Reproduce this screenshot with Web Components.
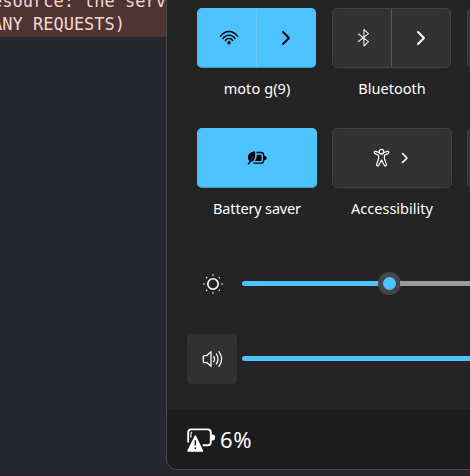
<!DOCTYPE html>
<html lang="en"><head><meta charset="utf-8"><title>Quick settings</title>
<style>
html,body{margin:0;height:476px;overflow:hidden;background:#26272c}
body{font-family:"Noto Sans","Open Sans",sans-serif}
</style></head><body>
<quick-desktop></quick-desktop>
<script>
const define=(name,html,setup)=>customElements.define(name,class extends HTMLElement{
  connectedCallback(){
    if(this.shadowRoot)return;
    const root=this.attachShadow({mode:'open'});
    root.innerHTML=html;
    if(setup)setup(this,root);
  }
});
const icons={
wifi:'<svg width="20" height="18" viewBox="0 0 20 18" fill="none" stroke="currentColor" stroke-width="1.35" stroke-linecap="round"><path d="M1.4 7.4C6 .9 14 .9 18.6 7.4M3.9 9.5C7.4 4.9 12.6 4.9 16.1 9.5M6.3 11.5c2.1-2.9 5.3-2.9 7.4 0"/><circle cx="10" cy="13.8" r="1.7" fill="currentColor" stroke="none"/></svg>',
bt:'<svg width="14" height="20" viewBox="0 0 14 20" fill="none" stroke="currentColor" stroke-width="1.05" stroke-opacity=".9" stroke-linejoin="round" stroke-linecap="round"><path d="M1.500 6l10 7.700-4.600 4.300V1.500l4.600 4.200L1.500 13.500"/></svg>',
chev:'<svg width="10" height="16" viewBox="0 0 10 16" fill="none" stroke="currentColor" stroke-width="1.9" stroke-linejoin="round" stroke-linecap="round"><path d="M2 2l6 6-6 6"/></svg>',
chevs:'<svg width="8" height="12" viewBox="0 0 8 12" fill="none" stroke="currentColor" stroke-width="1.6" stroke-linejoin="round" stroke-linecap="round"><path d="M1.500 1.500L6 6l-4.500 4.500"/></svg>',
saver:'<svg width="20" height="16" viewBox="0 0 20 16"><path d="M8 1.300C4 2 1 3.600 1 7.200c0 1.800.7 3 1.600 3.800L.5 14l1.300.7 2.100-3C7.500 11.800 8.600 8 8 1.300z" fill="currentColor"/><path d="M4 10.500L6.300 6.500" stroke="#3390c0" stroke-width=".6"/><path d="M9.500 2.500h4.700c1.500 0 2.400.9 2.400 2.400v5.900c0 1.500-.9 2.400-2.400 2.400H6.200" fill="none" stroke="currentColor" stroke-width="1.300"/><path d="M9.800 4.800h4.700v6.200H7.800c1.300-1.500 2-3.500 2-6.200zM17 5.500l2.500 1.300v2.400L17 10.500z" fill="currentColor"/></svg>',
access:'<svg width="17" height="20" viewBox="0 0 17 20" fill="none" stroke="currentColor" stroke-width="1.200" stroke-linejoin="round"><circle cx="8.500" cy="3.600" r="2.300"/><path d="M6.400 4.800L2.800 3.400C1.200 2.900.6 5 2 5.600L5.600 7.300v3.200L3.700 16.300c-.4 1.700 1.600 2.300 2.200.8L8.500 12l2.600 5.100c.7 1.500 2.600.9 2.200-.8l-1.900-5.800V7.300L15 5.600c1.400-.7.800-2.700-.8-2.200l-3.600 1.400c-1.200 1.300-3 1.300-4.200 0z"/></svg>',
sun:'<svg width="22" height="22" viewBox="0 0 22 22"><circle cx="11" cy="11" r="5.200" fill="none" stroke="currentColor" stroke-width="1.600"/><g fill="currentColor"><circle cx="11" cy="2" r=".8"/><circle cx="11" cy="20" r=".8"/><circle cx="2" cy="11" r=".8"/><circle cx="20" cy="11" r=".8"/><circle cx="4.700" cy="4.700" r=".8"/><circle cx="17.300" cy="4.700" r=".8"/><circle cx="4.700" cy="17.300" r=".8"/><circle cx="17.300" cy="17.300" r=".8"/></g></svg>',
sound:'<svg width="22" height="20" viewBox="0 0 22 20" fill="none" stroke="currentColor" stroke-width="1.250" stroke-linejoin="round" stroke-linecap="round"><path d="M1.300 7.500q0-1 1-1h2.500L9 2.700v14.600l-4.200-3.800H2.300q-1 0-1-1zM11.700 7.300q1.700 2.700 0 5.400M14.300 5q3.400 5 0 10M16.900 2.600q5.400 7.400 0 14.800"/></svg>',
batt:'<svg width="29" height="25" viewBox="0 0 29 25"><path d="M1.200 14.500V4.500Q1.200 1.400 4.300 1.400H20.700Q23.800 1.400 23.800 4.500V14.200Q23.800 17.300 20.700 17.300H15.700" fill="none" stroke="#fff" stroke-width="1.900"/><path d="M4 9.500V5.800Q4 4.500 5.200 4.200" fill="none" stroke="#ddd" stroke-width="1.300"/><path d="M24 6.500h1.500q2.500 0 2.500 1.700v2.600Q28 12.500 25.500 12.500H24z" fill="#fff"/><path d="M8.300 8.300L1.200 22.800h14.200z" fill="#fff" stroke="#fff" stroke-width="1.800" stroke-linejoin="round"/><path d="M8.300 12.300v5.200M8.300 19.300v1.700" stroke="#1c1c1c" stroke-width="1.500"/></svg>'
};
define('ui-icon','<style>:host{display:block;flex:none}svg{display:block}</style>',(el,root)=>root.innerHTML+=icons[el.getAttribute('name')]||'');
define('console-message',`<style>:host{display:block;height:37px;background:#4e3534;color:#f8d5d3;font:17px/23px "DejaVu Sans Mono",monospace;white-space:pre;overflow:hidden}div{margin:-10px 0 0 -8px}</style><div><slot></slot></div>`);
define('quick-tile',`<style>
:host{display:block;width:120px;text-align:center;color:#fff}
.b{box-sizing:border-box;height:60px;width:120px;border:1px solid #424242;border-radius:5px;background:#323232;display:flex;align-items:stretch}
:host([on]) .b{background:#4cc2ff;border-color:#55c3fb;border-bottom-color:#4098c4;color:#000}
:host([split]) .b{width:119px}
.half{flex:1;display:flex;align-items:center;justify-content:center;gap:11px;box-sizing:border-box}
:host([split]) .half:first-child{flex:0 0 58px;padding-left:3px}
:host([more]) .half{padding-right:3px}
:host([split]) .half+.half{border-left:1px solid #5a5a5a}
:host([split][on]) .half+.half{border-color:#68c8fa}
.l{font-size:14.500px;line-height:20px;margin-top:10px;white-space:nowrap;height:20px}
.l span{display:inline-block;letter-spacing:var(--track,0)}
</style><div class="b"></div><div class="l"><span><slot></slot></span></div>`,(el,root)=>{
 const icon=n=>`<ui-icon name="${n}"></ui-icon>`,n=icon(el.getAttribute('icon'));
 root.querySelector('.b').innerHTML=el.hasAttribute('split')?`<div class="half">${n}</div><div class="half">${icon('chev')}</div>`:`<div class="half">${n}${el.hasAttribute('more')?icon('chevs'):''}</div>`;
});
define('quick-slider',`<style>
:host{display:flex;align-items:center;height:50px;color:#fff}
.i{width:50px;height:50px;border-radius:5px;display:flex;align-items:center;justify-content:center;flex:none;box-sizing:border-box;padding-left:1px}
:host([boxed]) .i{background:#323232}
.t{flex:1;display:flex;align-items:center;margin-left:5px;height:25px;padding-bottom:2px}
.f{height:5px;background:#4cc2ff;border-radius:3px 0 0 3px;width:var(--fill,100%)}
.k{box-sizing:border-box;width:23px;height:23px;border:5px solid #454545;border-radius:50%;background:#4cc2ff;flex:none;margin:0 -1px}
.r{height:5px;background:#9a9a9a;flex:1}
</style><div class="i"></div><div class="t"><div class="f"></div></div>`,(el,root)=>{
 root.querySelector('.i').innerHTML=`<ui-icon name="${el.getAttribute('icon')}"></ui-icon>`;
 if(el.hasAttribute('knob'))root.querySelector('.t').insertAdjacentHTML('beforeend','<div class="k"></div><div class="r"></div>');
});
define('battery-footer',`<style>:host{display:flex;align-items:center;height:60px;background:#1c1c1c;padding-left:20px;color:#fff;font-size:22px;line-height:30px;border-top:1px solid #202020;box-sizing:border-box}
span{margin:0 0 2px 4px;letter-spacing:.7px}ui-icon{margin-top:1px}</style><ui-icon name="batt"></ui-icon><span><slot></slot></span>`);
define('quick-panel',`<style>
:host{display:flex;flex-direction:column;box-sizing:border-box;height:470px;width:360px;border:1px solid #47484c;border-top:0;border-radius:0 0 11px 11px;background:#242424;overflow:hidden}
.g{display:grid;grid-template-columns:repeat(3,120px);column-gap:15px;row-gap:30px;padding:8px 0 0 30px;grid-auto-rows:90px}
.s{display:flex;flex-direction:column;gap:25px;padding:41px 0 0 20px}
battery-footer{margin-top:auto}
</style><div class="g">
<quick-tile on split icon="wifi" style="--track:.08px">moto g(9)</quick-tile><quick-tile split icon="bt">Bluetooth</quick-tile><quick-tile></quick-tile>
<quick-tile on icon="saver" style="--track:-.17px">Battery saver</quick-tile><quick-tile more icon="access">Accessibility</quick-tile><quick-tile></quick-tile></div>
<div class="s"><quick-slider icon="sun" knob style="--fill:137px"></quick-slider><quick-slider boxed icon="sound"></quick-slider></div>
<battery-footer>6%</battery-footer>`);
define('quick-desktop',`<style>:host{display:grid;width:470px;height:476px;overflow:hidden;background:linear-gradient(#26272c 475px,#291c28 475px)}
console-message,quick-panel{grid-area:1/1;align-self:start}quick-panel{margin-left:166px}</style>
<console-message>esource: the serv
ANY REQUESTS)</console-message><quick-panel></quick-panel>`);
</script></body></html>
